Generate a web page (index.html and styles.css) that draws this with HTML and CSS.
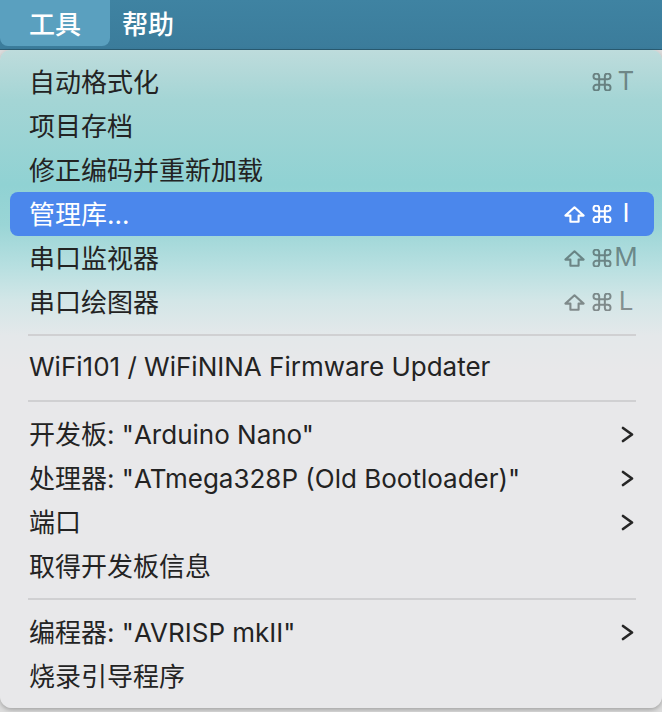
FILE: index.html
```html
<!DOCTYPE html>
<html lang="zh-CN">
<head>
<meta charset="utf-8">
<title>工具菜单</title>
<link rel="stylesheet" href="styles.css">
</head>
<body>
<div class="menubar">
  <div class="mb-item active">工具</div>
  <div class="mb-item">帮助</div>
</div>
<div class="menu">
  <div class="item"><span class="label">自动格式化</span><span class="sc"><span class="mods"><svg class="cmd" viewBox="2.5 2.5 19 19"><path d="M15 6v12a3 3 0 1 0 3-3H6a3 3 0 1 0 3 3V6a3 3 0 1 0-3 3h12a3 3 0 1 0-3-3"/></svg></span><span class="key">T</span></span></div>
  <div class="item"><span class="label">项目存档</span></div>
  <div class="item"><span class="label">修正编码并重新加载</span></div>
  <div class="item selected"><span class="label">管理库...</span><span class="sc"><span class="mods"><svg class="shift" viewBox="0 0 21 17"><path d="M10.5 1.3L19.6 9.6H14.6V15.7H6.4V9.6H1.4Z"/></svg><svg class="cmd" viewBox="2.5 2.5 19 19"><path d="M15 6v12a3 3 0 1 0 3-3H6a3 3 0 1 0 3 3V6a3 3 0 1 0-3 3h12a3 3 0 1 0-3-3"/></svg></span><span class="key">I</span></span></div>
  <div class="item"><span class="label">串口监视器</span><span class="sc"><span class="mods"><svg class="shift" viewBox="0 0 21 17"><path d="M10.5 1.3L19.6 9.6H14.6V15.7H6.4V9.6H1.4Z"/></svg><svg class="cmd" viewBox="2.5 2.5 19 19"><path d="M15 6v12a3 3 0 1 0 3-3H6a3 3 0 1 0 3 3V6a3 3 0 1 0-3 3h12a3 3 0 1 0-3-3"/></svg></span><span class="key">M</span></span></div>
  <div class="item"><span class="label">串口绘图器</span><span class="sc"><span class="mods"><svg class="shift" viewBox="0 0 21 17"><path d="M10.5 1.3L19.6 9.6H14.6V15.7H6.4V9.6H1.4Z"/></svg><svg class="cmd" viewBox="2.5 2.5 19 19"><path d="M15 6v12a3 3 0 1 0 3-3H6a3 3 0 1 0 3 3V6a3 3 0 1 0-3 3h12a3 3 0 1 0-3-3"/></svg></span><span class="key">L</span></span></div>
  <div class="sep"></div>
  <div class="item"><span class="label">WiFi101 / WiFiNINA Firmware Updater</span></div>
  <div class="sep"></div>
  <div class="item"><span class="label">开发板: "Arduino Nano"</span><svg class="chev" viewBox="0 0 13 17"><polyline points="2,2 11,8.5 2,15"/></svg></div>
  <div class="item"><span class="label">处理器: "ATmega328P (Old Bootloader)"</span><svg class="chev" viewBox="0 0 13 17"><polyline points="2,2 11,8.5 2,15"/></svg></div>
  <div class="item"><span class="label">端口</span><svg class="chev" viewBox="0 0 13 17"><polyline points="2,2 11,8.5 2,15"/></svg></div>
  <div class="item"><span class="label">取得开发板信息</span></div>
  <div class="sep"></div>
  <div class="item"><span class="label">编程器: "AVRISP mkII"</span><svg class="chev" viewBox="0 0 13 17"><polyline points="2,2 11,8.5 2,15"/></svg></div>
  <div class="item"><span class="label">烧录引导程序</span></div>
</div>
</body>
</html>
```
FILE: styles.css
```css
* { box-sizing: border-box; }
html, body { margin: 0; padding: 0; }
body {
  width: 662px;
  height: 712px;
  overflow: hidden;
  background: #dcdcdc;
  font-family: "Inter", "Noto Sans CJK SC", sans-serif;
  font-size: 26px;
  color: #232323;
}
.menubar {
  height: 50px;
  display: flex;
  align-items: stretch;
  background: linear-gradient(#3f83a2, #3b7c9b);
  border-bottom: 1px solid #2a5c73;
  padding-bottom: 3px;
}
.mb-item {
  display: flex;
  align-items: center;
  color: #ffffff;
  font-weight: 500;
  padding: 0 12px 2px;
}
.mb-item.active {
  width: 110px;
  justify-content: center;
  background: #5aa0bf;
  border-radius: 0 0 8px 8px;
}
.menu {
  width: 662px;
  height: 658px;
  padding: 10px 8px 10px 10px;
  border-radius: 10px 10px 12px 12px;
  background: linear-gradient(#bedcdc 0px, #a4d5d5 50px, #90d2d3 135px, #9ad5d6 175px, #b6dfe0 215px, #d2e6e7 250px, #e4e8ea 285px, #e8e8ea 320px, #e8e8ea 100%);
  box-shadow: 0 2px 4px rgba(0,0,0,0.25);
}
.item {
  height: 44px;
  display: flex;
  align-items: center;
  padding: 0 20px 3px 19px;
  border-radius: 8px;
  white-space: nowrap;
}
.label { flex: 1; }
.item.selected {
  background: #4b87ec;
  color: #ffffff;
}
.sc {
  display: flex;
  align-items: center;
  color: rgba(0,0,0,0.4);
}
.selected .sc { color: #ffffff; }
.mods {
  display: flex;
  align-items: center;
  gap: 7px;
  padding-top: 3px;
}
.key {
  width: 28px;
  text-align: center;
  margin-right: -6px;
  font-size: 26px;
}
svg { fill: none; stroke: currentColor; }
.cmd { width: 20px; height: 18px; stroke-width: 2.1; }
.shift { width: 21px; height: 17px; stroke-width: 2.1; stroke-linejoin: round; }
.chev {
  width: 13px;
  height: 17px;
  stroke: #262626;
  stroke-width: 2.7;
  stroke-linecap: round;
  stroke-linejoin: round;
  margin-top: 3px;
}
.sep {
  height: 22px;
  display: flex;
  align-items: center;
  padding: 0 18px 0 18px;
}
.sep::before {
  content: "";
  flex: 1;
  height: 2px;
  background: #d0d0d2;
}
```
